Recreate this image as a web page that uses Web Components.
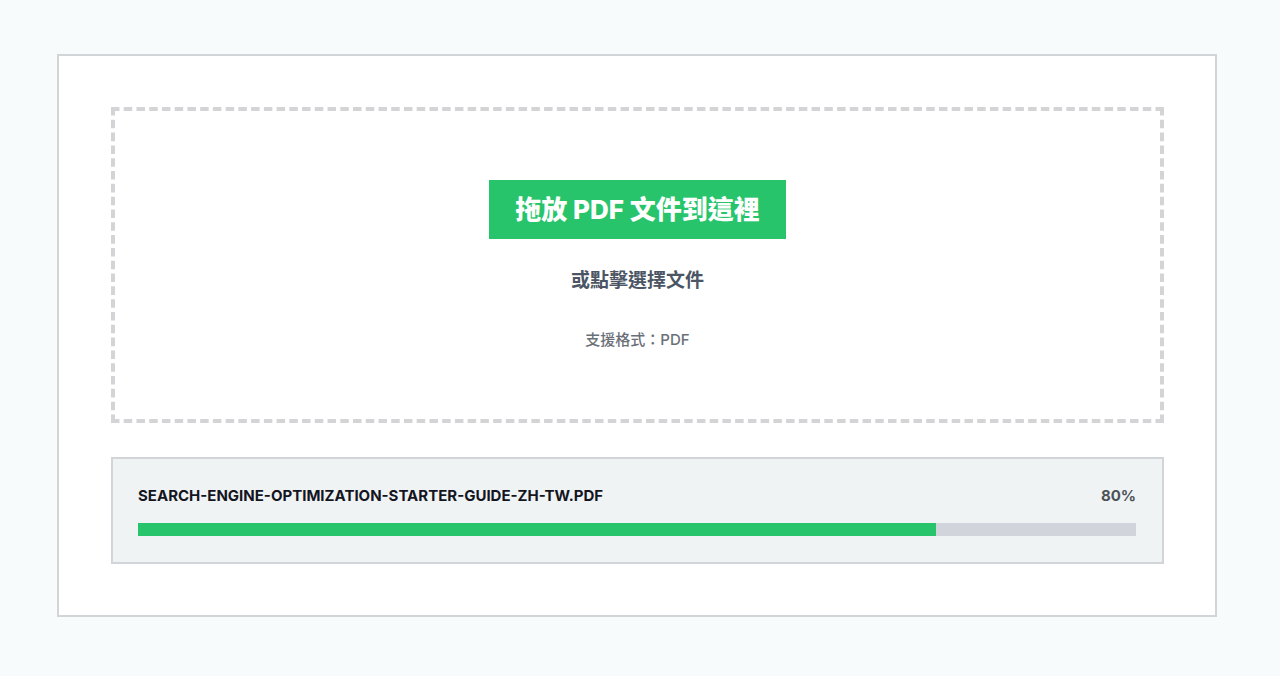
<!DOCTYPE html>
<html lang="zh-Hant">
<head>
<meta charset="utf-8">
<meta name="viewport" content="width=device-width, initial-scale=1">
<title>PDF</title>
<style>
  body {
    margin: 0;
    background: #f8fbfb;
    color: #14161f;
    font-family: Inter, "Noto Sans CJK TC", sans-serif;
  }
</style>
</head>
<body>
<upload-panel>
  <drop-zone>
    <span slot="title">拖放 PDF 文件到這裡</span>
    <span slot="hint">或點擊選擇文件</span>
    <span slot="formats">支援格式：PDF</span>
  </drop-zone>
  <file-progress name="SEARCH-ENGINE-OPTIMIZATION-STARTER-GUIDE-ZH-TW.PDF" value="80"></file-progress>
</upload-panel>

<template id="upload-panel">
  <style>
    :host { display: block; padding: 54px 63px 59px 57px; }
    main {
      display: flex;
      flex-direction: column;
      gap: 34px;
      padding: 51px 51px 51px 52px;
      border: 2px solid #d2d5d7;
      background: #fff;
    }
  </style>
  <main><slot></slot></main>
</template>

<template id="drop-zone">
  <style>
    :host { display: block; }
    .zone {
      position: relative;
      display: flex;
      flex-direction: column;
      align-items: center;
      padding: 73px 24px 71px;
      text-align: center;
    }
    .outline {
      position: absolute;
      inset: 0;
      width: 100%;
      height: 100%;
      stroke: #d4d4d6;
      stroke-width: 8;
    }
    button {
      position: relative;
      padding: 0 26px;
      border: 0;
      background: #27c46b;
      color: #fff;
      font: inherit;
      font-size: 26px;
      font-weight: 800;
      line-height: 59px;
      cursor: pointer;
    }
    p { margin: 0; }
    .hint {
      margin-top: 27px;
      color: #4b5563;
      font-size: 19px;
      font-weight: 600;
      line-height: 30px;
    }
    .formats {
      margin-top: 32px;
      color: #6b7078;
      font-size: 15px;
      font-weight: 500;
      line-height: 24px;
    }
  </style>
  <section class="zone">
    <svg class="outline" aria-hidden="true">
      <line x1="0" y1="0" x2="100%" y2="0" pathLength="248" stroke-dasharray="2 1"/>
      <line x1="0" y1="100%" x2="100%" y2="100%" pathLength="248" stroke-dasharray="2 1"/>
      <line x1="0" y1="0" x2="0" y2="100%" pathLength="74" stroke-dasharray="2 1"/>
      <line x1="100%" y1="0" x2="100%" y2="100%" pathLength="74" stroke-dasharray="2 1"/>
    </svg>
    <button type="button"><slot name="title"></slot></button>
    <p class="hint"><slot name="hint"></slot></p>
    <p class="formats"><slot name="formats"></slot></p>
  </section>
</template>

<template id="file-progress">
  <style>
    :host { display: block; }
    .file {
      padding: 25px 26px 26px 25px;
      border: 2px solid #d1d5d9;
      background: #f0f3f4;
    }
    .row {
      display: flex;
      justify-content: space-between;
      gap: 16px;
      margin-bottom: 15px;
      font-size: 15px;
      font-weight: 700;
      line-height: 24px;
    }
    .percent { color: #4d5259; }
    progress {
      display: block;
      width: 100%;
      height: 13px;
      border: 0;
      appearance: none;
      background: #d1d5db;
    }
    progress::-webkit-progress-bar { background: #d1d5db; }
    progress::-webkit-progress-value { background: #27c46b; }
  </style>
  <section class="file">
    <div class="row">
      <label for="bar"></label>
      <span class="percent"></span>
    </div>
    <progress id="bar" max="100"></progress>
  </section>
</template>

<script>
  class TemplateElement extends HTMLElement {
    constructor() {
      super();
      const template = document.getElementById(this.localName);
      this.attachShadow({ mode: "open" }).append(template.content.cloneNode(true));
    }
  }

  class UploadPanel extends TemplateElement {}
  class DropZone extends TemplateElement {}

  class FileProgress extends TemplateElement {
    static observedAttributes = ["name", "value"];
    attributeChangedCallback() {
      const value = Number(this.getAttribute("value")) || 0;
      this.shadowRoot.querySelector("label").textContent = this.getAttribute("name");
      this.shadowRoot.querySelector(".percent").textContent = value + "%";
      this.shadowRoot.querySelector("progress").value = value;
    }
  }

  customElements.define("upload-panel", UploadPanel);
  customElements.define("drop-zone", DropZone);
  customElements.define("file-progress", FileProgress);
</script>
</body>
</html>
